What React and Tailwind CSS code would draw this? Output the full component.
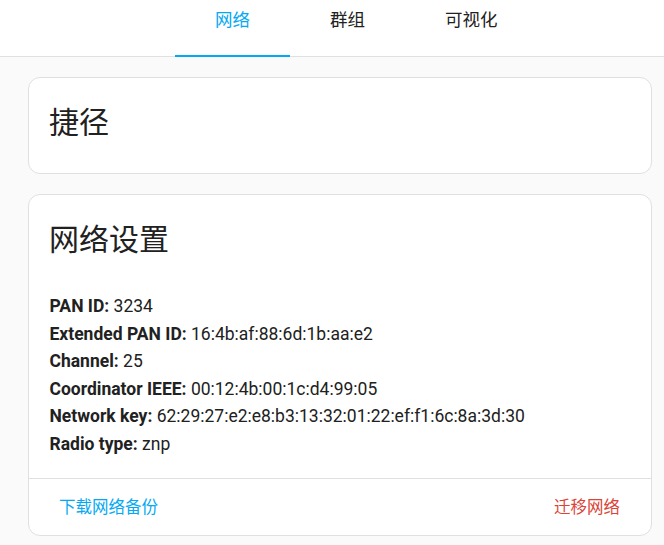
import React, { useState } from 'react';

const font = { fontFamily: 'Roboto, "Noto Sans CJK SC", sans-serif' };

const tabs = ['网络', '群组', '可视化'];

const info = [
    ['PAN ID:', '3234'],
    ['Extended PAN ID:', '16:4b:af:88:6d:1b:aa:e2'],
    ['Channel:', '25'],
    ['Coordinator IEEE:', '00:12:4b:00:1c:d4:99:05'],
    ['Network key:', '62:29:27:e2:e8:b3:13:32:01:22:ef:f1:6c:8a:3d:30'],
    ['Radio type:', 'znp'],
];

const App = () => {
    const [tab, setTab] = useState(0);

    return (
        <div className="min-h-[545px] bg-[#fafafa] text-[#212121]" style={font}>
            <nav className="flex h-[57px] border-b border-[#e0e0e0] bg-white pl-[175px]">
                {tabs.map((t, i) => (
                    <button
                        key={t}
                        onClick={() => setTab(i)}
                        className={`relative h-[56px] px-[40px] pt-[11px] text-[17.5px] leading-[18px] flex items-start ${tab === i ? 'text-[#03a9f4]' : 'text-[#212121]'}`}
                    >
                        {t}
                        {tab === i && <span className="absolute left-0 right-0 bottom-[-1px] h-[2px] bg-[#03a9f4]" />}
                    </button>
                ))}
            </nav>

            <div className="ml-[28px] w-[624px] pt-[20px] flex flex-col gap-[20px]">
                <div className="rounded-[12px] border border-[#e0e0e0] bg-white px-[20px] pt-[25px] pb-[30px]">
                    <h1 className="text-[30px] leading-[40px]">捷径</h1>
                </div>

                <div className="rounded-[12px] border border-[#e0e0e0] bg-white">
                    <div className="px-[20px] pt-[25px] pb-[20px]">
                        <h1 className="text-[30px] leading-[40px]">网络设置</h1>
                        <div className="mt-[33px] ml-[0.5px] text-[17.5px] leading-[27.5px]">
                            {info.map(([k, v]) => (
                                <div key={k}>
                                    <span className="font-bold">{k}</span> {v}
                                </div>
                            ))}
                        </div>
                    </div>
                    <div className="flex h-[57px] items-center justify-between border-t border-[#e0e0e0] pl-[30px] pr-[31px] pt-[2px] text-[16.5px]">
                        <button className="text-[#03a9f4]">下载网络备份</button>
                        <button className="text-[#db4437]">迁移网络</button>
                    </div>
                </div>
            </div>
        </div>
    );
};

export default App;
